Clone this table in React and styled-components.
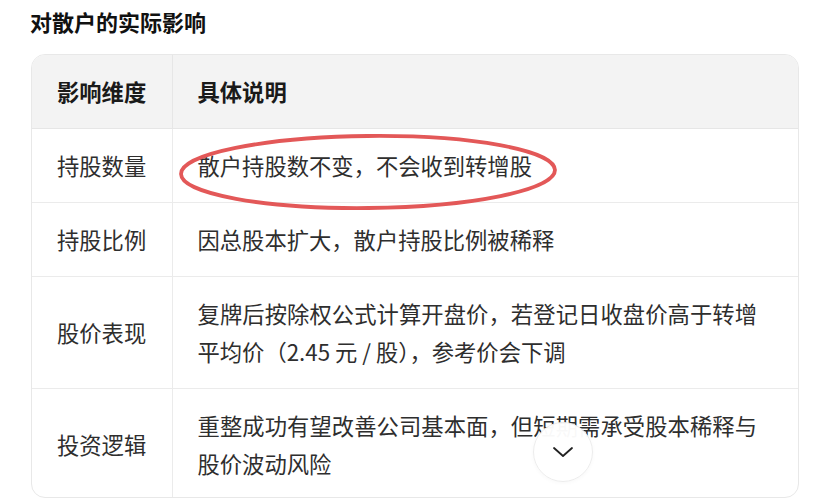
import React from 'react'
import styled, { createGlobalStyle } from 'styled-components'

const GlobalStyle = createGlobalStyle`
    body {
        margin: 0;
        background: #fff;
        font-family: "Noto Sans CJK SC", "Noto Sans", sans-serif;
        color: #222;
    }
`

const Page = styled.div`
    padding: 5px 29px 0 30px;
    width: 828px;
    height: 500px;
    box-sizing: border-box;
    overflow: hidden;
`

const Title = styled.h3`
    margin: 0 0 17px 0;
    font-size: 22px;
    line-height: 32px;
    font-weight: 700;
    color: #111;
`

const Wrap = styled.div`
    position: relative;
    margin-left: 1px;
`

const Card = styled.div`
    border: 1px solid #e8e8e8;
    border-radius: 14px;
    overflow: hidden;
    height: 444px;
    box-sizing: border-box;
`

const Table = styled.table`
    width: 100%;
    table-layout: fixed;
    border-collapse: collapse;
    font-size: 22.3px;
    line-height: 38px;
`

const Th = styled.th`
    background: #f3f3f3;
    text-align: left;
    font-weight: 700;
    color: #1a1a1a;
    padding: 17px 20px 18px 25px;
    border-bottom: 1px solid #e6e6e6;
    white-space: nowrap;
    & + & {
        border-left: 1px solid #e6e6e6;
    }
`

const Td = styled.td`
    padding: 17px ${p => (p.$justify ? '41px' : '20px')} 18px 25px;
    color: #2e2e2e;
    vertical-align: middle;
    white-space: ${p => (p.$justify ? 'normal' : 'nowrap')};
    text-align: ${p => (p.$justify ? 'justify' : 'left')};
    border-top: 1px solid #ebebeb;
    & + & {
        border-left: 1px solid #ebebeb;
    }
`

const Circle = styled.svg`
    position: absolute;
    left: 146px;
    top: 78px;
    pointer-events: none;
`

const MoreButton = styled.button`
    position: absolute;
    left: 502px;
    top: 368px;
    width: 60px;
    height: 60px;
    border-radius: 50%;
    border: 1px solid #ededed;
    background: rgba(255, 255, 255, 0.97);
    box-shadow: 0 1px 4px rgba(0, 0, 0, 0.03);
    display: flex;
    align-items: center;
    justify-content: center;
    padding: 0;
    cursor: pointer;
`

const rows = [
    { k: '持股数量', v: '散户持股数不变，不会收到转增股' },
    { k: '持股比例', v: '因总股本扩大，散户持股比例被稀释' },
    { k: '股价表现', v: '复牌后按除权公式计算开盘价，若登记日收盘价高于转增平均价（2.45 元 / 股），参考价会下调' },
    { k: '投资逻辑', v: '重整成功有望改善公司基本面，但短期需承受股本稀释与股价波动风险' },
]

const App = () => {
    return (
        <Page>
            <GlobalStyle />
            <Title>对散户的实际影响</Title>
            <Wrap>
                <Card>
                    <Table>
                        <colgroup>
                            <col style={{ width: 140 }} />
                            <col />
                        </colgroup>
                        <thead>
                            <tr>
                                <Th>影响维度</Th>
                                <Th>具体说明</Th>
                            </tr>
                        </thead>
                        <tbody>
                            {rows.map(r => (
                                <tr key={r.k}>
                                    <Td>{r.k}</Td>
                                    <Td $justify>{r.v}</Td>
                                </tr>
                            ))}
                        </tbody>
                    </Table>
                </Card>
                <Circle width="384" height="82" viewBox="0 0 384 82">
                    <ellipse cx="191" cy="40" rx="187" ry="36" fill="none" stroke="#e35858" strokeWidth="3.8" transform="rotate(-0.6 191 40)" />
                </Circle>
                <MoreButton aria-label="more">
                    <svg width="24" height="14" viewBox="0 0 24 14">
                        <path d="M3 3 L12 11 L21 3" fill="none" stroke="#222" strokeWidth="1.8" strokeLinecap="round" strokeLinejoin="round" />
                    </svg>
                </MoreButton>
            </Wrap>
        </Page>
    )
}

export default App
